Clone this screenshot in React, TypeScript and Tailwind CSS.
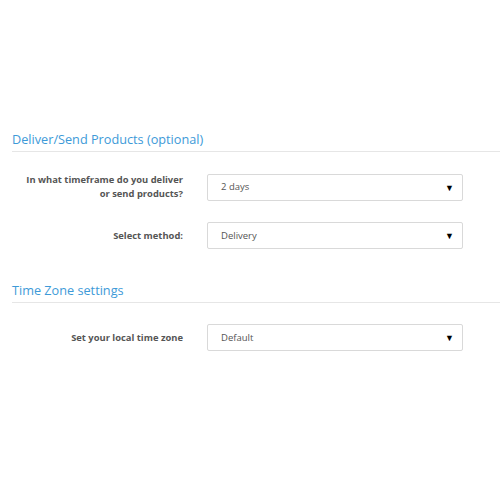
const Select = ({ value }: { value: string }) => {
  return (
    <div className="ml-6 flex h-[27px] w-[256px] items-center justify-between rounded-[2px] border border-[#d9d9d9] bg-white pl-[13px] pr-[8px] text-[9.5px] text-[#555]">
      <span className="pt-[1px]">{value}</span>
      <span className="text-[9px] leading-none text-black">▼</span>
    </div>
  );
};

const Row = ({ label, value }: { label: React.ReactNode; value: string }) => {
  return (
    <div className="flex items-center">
      <div className="w-[183px] text-right text-[9.4px] font-bold leading-[14px] text-[#555]">
        {label}
      </div>
      <Select value={value} />
    </div>
  );
};

const Heading = ({ title }: { title: string }) => {
  return (
    <div className="ml-3 border-b border-[#e6e6e6] pb-[3px] pt-[1px] text-[12.7px] leading-[18px] text-[#3d9ad8]">
      {title}
    </div>
  );
};

export default function App() {
  return (
    <div
      className="h-[500px] w-[500px] bg-white pt-[129px]"
      style={{ fontFamily: '"Open Sans", "Noto Sans", sans-serif' }}
    >
      <Heading title="Deliver/Send Products (optional)" />
      <div className="mt-[21px] flex flex-col gap-[21px]">
        <Row
          label={
            <>
              In what timeframe do you deliver
              <br />
              or send products?
            </>
          }
          value="2 days"
        />
        <Row label="Select method:" value="Delivery" />
      </div>
      <div className="mt-[31px]">
        <Heading title="Time Zone settings" />
      </div>
      <div className="mt-[21px]">
        <Row label="Set your local time zone" value="Default" />
      </div>
    </div>
  );
}
